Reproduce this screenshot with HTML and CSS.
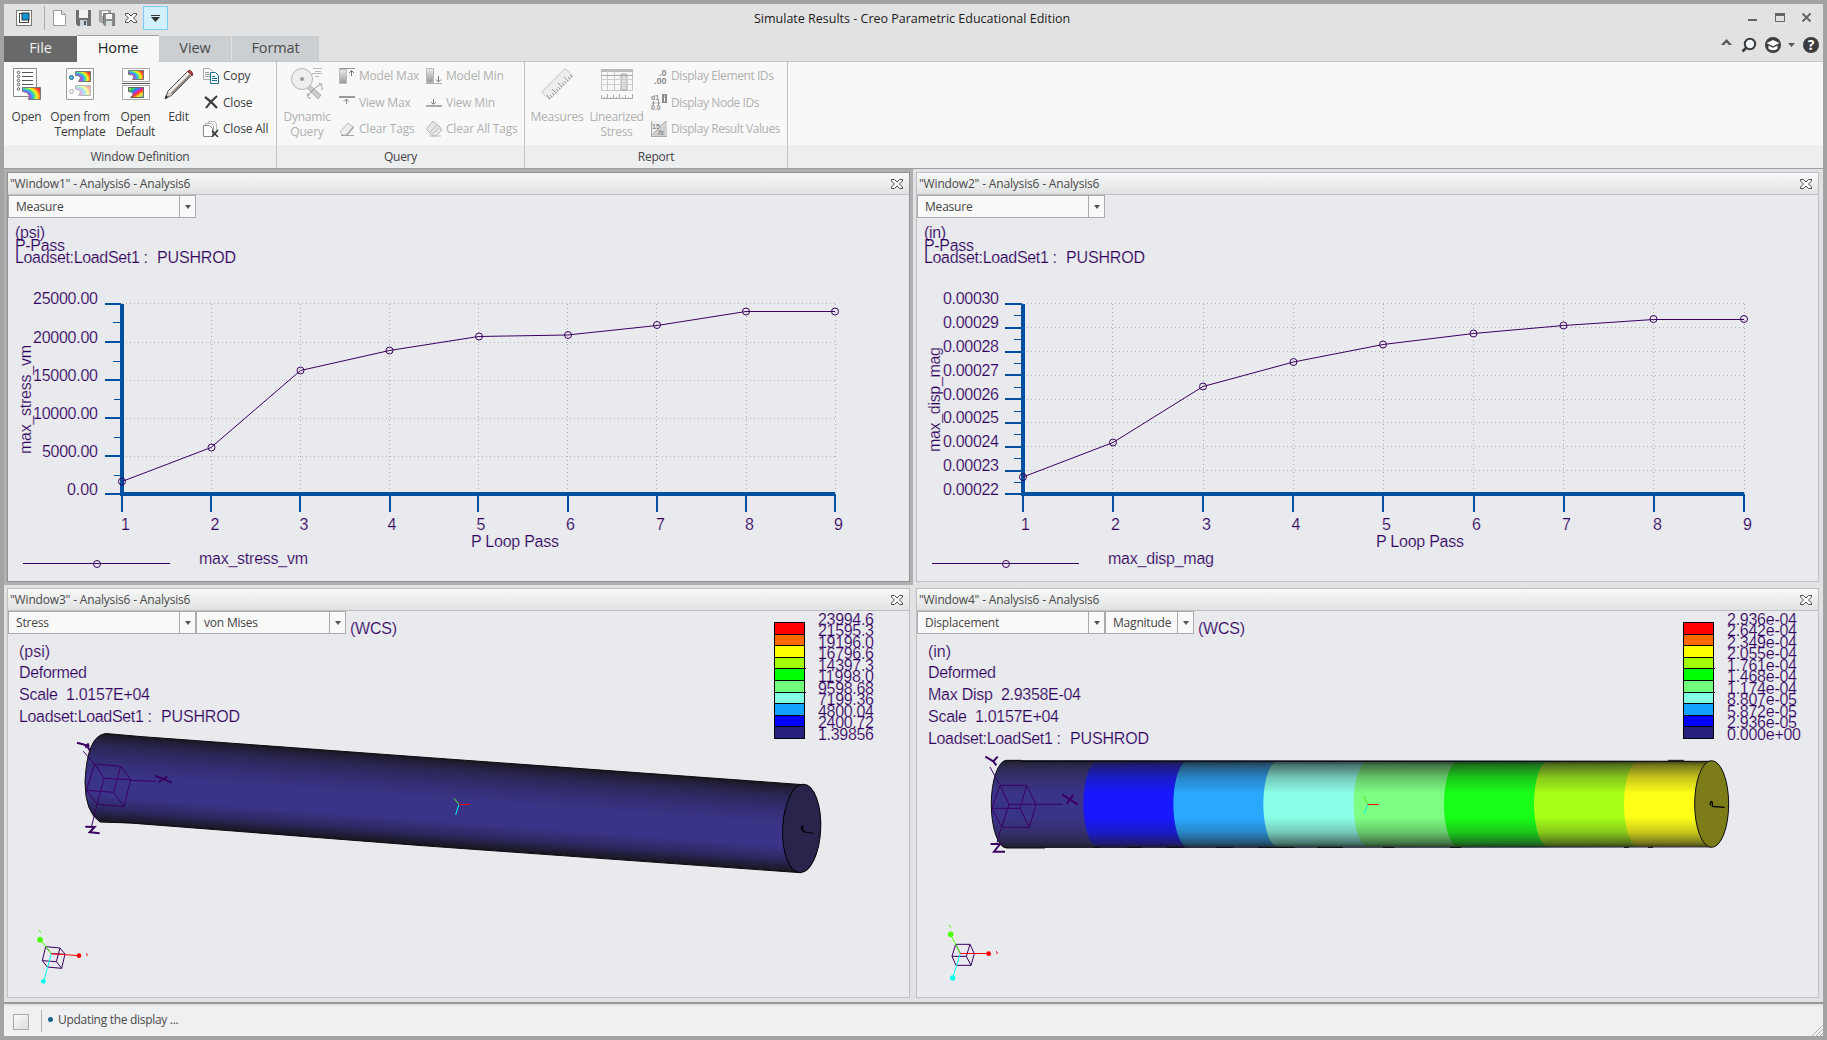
FILE: index.html
```html
<!DOCTYPE html>
<html lang="en">
<head>
<meta charset="utf-8">
<title>Simulate Results - Creo Parametric Educational Edition</title>
<link rel="stylesheet" href="styles.css">
</head>
<body>
<svg class="defs" width="0" height="0" aria-hidden="true">
  <defs>
    <radialGradient id="rainbow" cx="0" cy=".75" r="1.05">
      <stop offset=".3" stop-color="#f040c8"/><stop offset=".42" stop-color="#9058ff"/><stop offset=".53" stop-color="#38a8ff"/><stop offset=".63" stop-color="#40e090"/><stop offset=".76" stop-color="#f8f820"/><stop offset=".88" stop-color="#ff9a20"/><stop offset="1" stop-color="#ff3030"/>
    </radialGradient>
    <linearGradient id="rainbow2" x1="0" y1="0" x2="1" y2="1">
      <stop offset="0" stop-color="#ffe020"/><stop offset=".2" stop-color="#30d060"/><stop offset=".36" stop-color="#2080ff"/><stop offset=".46" stop-color="#c030e0"/><stop offset=".58" stop-color="#ff3030"/><stop offset=".76" stop-color="#ffe020"/><stop offset="1" stop-color="#40d0ff"/>
    </linearGradient>
    <linearGradient id="greys" x1="0" y1="0" x2="0" y2="1"><stop offset="0" stop-color="#eee"/><stop offset="1" stop-color="#999"/></linearGradient>
    <symbol id="xmark" viewBox="0 0 12 10"><path d="M.5.5h3l2.500 2.500 2.500-2.500h3v1.500l-3 3 3 3v1.500h-3l-2.500-2.500-2.500 2.500h-3V8l3-3-3-3z" fill="#fff" stroke="#4a4a4a" stroke-width="1"/></symbol>
    <linearGradient id="rod" gradientUnits="userSpaceOnUse" x1="450" y1="758.500" x2="443.500" y2="847">
      <stop offset="0" stop-color="#17161c"/><stop offset=".05" stop-color="#201e34"/><stop offset=".14" stop-color="#2a2654"/><stop offset=".3" stop-color="#332e72"/><stop offset=".48" stop-color="#3a3488"/><stop offset=".7" stop-color="#3a3488"/><stop offset=".85" stop-color="#2e2963"/><stop offset=".95" stop-color="#1f1c34"/><stop offset="1" stop-color="#17161c"/>
    </linearGradient>
    <linearGradient id="shade" x1="0" y1="0" x2="0" y2="1">
      <stop offset="0" stop-color="#1a1a1a" stop-opacity=".9"/><stop offset=".06" stop-color="#202020" stop-opacity=".6"/><stop offset=".2" stop-color="#222" stop-opacity=".25"/><stop offset=".38" stop-color="#222" stop-opacity="0"/><stop offset=".65" stop-color="#222" stop-opacity="0"/><stop offset=".82" stop-color="#222" stop-opacity=".25"/><stop offset=".94" stop-color="#202020" stop-opacity=".6"/><stop offset="1" stop-color="#1a1a1a" stop-opacity=".9"/>
    </linearGradient>
  </defs>
</svg>
<div class="app">
  <header class="titlebar">
    <div class="quick">
      <svg class="q-app" width="16" height="16"><rect x=".5" y=".5" width="15" height="15" fill="#fff" stroke="#777"/><rect x="3.500" y="3.500" width="9" height="9" fill="#fff" stroke="#444"/><rect x="6" y="3" width="7" height="7" fill="#0f94dc" stroke="#333"/></svg>
      <i class="q-sep"></i>
      <svg class="q-new" width="13" height="16"><path d="M.5.5h8l4 4v11h-12z" fill="#fff" stroke="#999"/><path d="M8.500.5v4h4" fill="#ddd" stroke="#999"/></svg>
      <svg class="q-save" width="15" height="16"><path d="M0 0h15v16H2l-2-2z" fill="#6e6e6e"/><path d="M3 0h9v8H3z" fill="#f2f2f2"/><path d="M4 10h7v6H4z" fill="#c8d4da"/><path d="M8 11h2v4H8z" fill="#555"/></svg>
      <svg class="q-saveall" width="17" height="16"><path d="M.5.5h11v12H2l-1.500-1.500z" fill="#aaa" stroke="#999"/><path d="M3 1h6v5H3z" fill="#f5f5f5"/><path d="M4.500 3.500h11v12H6l-1.500-1.500z" fill="#8b8b8b" stroke="#777"/><path d="M7 4h6v5H7z" fill="#f5f5f5"/><path d="M7 11h6v5H7z" fill="#d5dde0"/></svg>
      <svg class="q-x" width="12" height="10"><use href="#xmark"/></svg>
      <span class="q-more"><svg width="9" height="7"><path d="M0 0h9v1H0zM0 2h9L4.500 7z" fill="#333"/></svg></span>
    </div>
    <div class="caption">Simulate Results - Creo Parametric Educational Edition</div>
    <svg class="controls" width="106" height="42" viewBox="1717 11 106 42">
      <path d="M1748 19h9v2h-9z" fill="#666"/>
      <path d="M1775.500 13.500h9v8h-9zM1775 15h10" fill="none" stroke="#666"/><path d="M1775 13h10v3h-10z" fill="#666"/>
      <path d="M1802.500 13.500l8 8m0-8l-8 8" stroke="#666" stroke-width="2"/>
      <path d="M1721 45l5.500-6 5.500 6h-3l-2.500-2.500L1724 45z" fill="#555"/>
      <circle cx="1750" cy="44" r="5.200" fill="#eef6fa" stroke="#383c40" stroke-width="2"/><path d="M1746.500 47.500l-4 4" stroke="#383c40" stroke-width="2.600"/>
      <circle cx="1773" cy="45" r="8" fill="#3b3d40"/><path d="M1773 40l6.500 3-6.500 3.200-6.500-3.200z" fill="#fff"/><path d="M1768.500 45.500v3.200q4.500 3 9 0v-3.200l-4.500 2.200z" fill="#fff"/>
      <path d="M1788 43h7l-3.500 4z" fill="#555"/>
      <circle cx="1811" cy="45" r="8" fill="#3b3d40"/><text x="1811" y="50" class="help">?</text>
    </svg>
  </header>
  <nav class="tabs"><span class="tab file">File</span><span class="tab on">Home</span><span class="tab mid">View</span><span class="tab format">Format</span></nav>

  <section class="ribbon">
    <div class="group g1">
      <div class="tools">
        <div class="big"><svg width="32" height="32"><path d="M2.500.5h23v28h-23z" fill="#fff" stroke="#8a8a8a"/><path d="M11 4.500h11M11 8.500h11M11 12.500h11M11 16.500h11M11 21.500h6" stroke="#555"/><g fill="none" stroke="#666"><circle cx="7.500" cy="4.500" r="1.300"/><circle cx="7.500" cy="8.500" r="1.300"/><circle cx="7.500" cy="12.500" r="1.300"/><circle cx="7.500" cy="16.500" r="1.300"/><circle cx="7.500" cy="21" r="1.300"/></g><path d="M11.500 19.500h18v12h-12q3-7-6-8z" fill="url(#rainbow)" stroke="#777"/></svg><span>Open</span></div>
        <div class="big"><svg width="32" height="32"><path d="M2.500.5h27v31h-27z" fill="#fff" stroke="#999"/><circle cx="7.500" cy="9.500" r="2" fill="#5cc3e6" stroke="#16607c"/><circle cx="7.500" cy="23.500" r="2" fill="#fff" stroke="#aaa"/><path d="M11.500 3.500h15v10h-12q5-6-3-6z" fill="url(#rainbow)" stroke="#777"/><path d="M11.500 17.500h15v10h-12q5-6-3-6z" fill="url(#rainbow)" stroke="#555" opacity=".4"/></svg><span>Open from<br>Template</span></div>
        <div class="big"><svg width="32" height="32"><path d="M2.500.5h27v13h-27z" fill="#fff" stroke="#aaa"/><path d="M2.500 17.500h27v14h-27z" fill="#fff" stroke="#aaa"/><path d="M2 15.500h28" stroke="#555"/><path d="M8.500 2.500h15v9h-11q4-5-4-5z" fill="url(#rainbow)" stroke="#777"/><path d="M8.500 19.500h15v10h-13q6-5-2-6z" fill="url(#rainbow2)" stroke="#666"/></svg><span>Open<br>Default</span></div>
        <div class="big"><svg width="32" height="32"><path d="M2 31l3-8L25 3l4 4L9 27z" fill="#d9cec6" stroke="#555"/><path d="M5 24L25 4l1.500 1.500L7 25z" fill="#f6f2ee"/><path d="M9 26.500L28 8l-1.500-1.500L8 25z" fill="#8a7e78"/><path d="M24.500 3.500q2-2.500 4 0t1 4z" fill="#b03a34" stroke="#733"/><path d="M2 31l1-4 2 2z" fill="#222"/></svg><span>Edit</span></div>
        <ul class="small">
          <li><svg width="16" height="16"><path d="M.5.5h6l3 3v8h-9z" fill="#fff" stroke="#aaa"/><path d="M2 4.500h4M2 6.500h5M2 8.500h5" stroke="#999"/><path d="M7.500 4.500h5l3 3v8h-8z" fill="#fff" stroke="#1b6f93"/><path d="M9 8.500h3M9 10.500h5M9 12.500h5" stroke="#1b6f93"/></svg>Copy</li>
          <li><svg width="16" height="16"><path d="M2 3q7 5 12 11M14 2Q7 8 3 14" fill="none" stroke="#3c3f42" stroke-width="2.200"/></svg>Close</li>
          <li><svg width="16" height="16"><path d="M5.500.5h6l2 2v8h-8z" fill="#fff" stroke="#bbb"/><path d="M2.500 2.500h6l2 2v8h-8z" fill="#fff" stroke="#aaa"/><path d="M.5 4.500h6l3 3v8h-9z" fill="#fff" stroke="#888"/><path d="M9 10l6 6m0-7l-6 7" stroke="#333" stroke-width="1.500"/></svg>Close All</li>
        </ul>
      </div>
      <h2>Window Definition</h2>
    </div>
    <div class="group g2 off">
      <div class="tools">
        <div class="big"><svg width="32" height="32"><path d="M22 .5h9M24 3.500h6M21 5.500h10M24 8.500h4" stroke="#bbb"/><path d="M19 17l11 10-3 4-11-11z" fill="#ccc" stroke="#b5b5b5"/><circle cx="11" cy="11" r="10.500" fill="#eee" stroke="#b5b5b5"/><circle cx="11" cy="11" r="2" fill="#999"/><path d="M31 16q-7 2-14 12M20 30q-5 1-3-5M31 22q1-5-3-7" fill="none" stroke="#999"/></svg><span>Dynamic<br>Query</span></div>
        <ul class="small">
          <li><svg width="16" height="16"><path d="M0 .5h16" stroke="#999"/><path d="M.5 1.500h7v14h-7z" fill="url(#greys)" stroke="#bbb"/><path d="M12.500 8V2.500M10 5l2.500-2.500L15 5" fill="none" stroke="#777"/></svg>Model Max</li>
          <li><svg width="16" height="16"><path d="M0 3h16" stroke="#999" stroke-width="2"/><path d="M7.500 10V5M5 7.500L7.500 5 10 7.500" fill="none" stroke="#888"/></svg>View Max</li>
          <li><svg width="16" height="16"><path d="M1 11L8 3q1-1 2 0l3 2q1 1 0 2l-6 7H3z" fill="#eee" stroke="#bbb"/><path d="M2 14.500h13M8 14l6-7v-2" fill="none" stroke="#a5a5a5" stroke-width="1.200"/></svg>Clear Tags</li>
        </ul>
        <ul class="small">
          <li><svg width="16" height="16"><path d="M0 15.500h16" stroke="#aaa"/><path d="M.5.5h7v14h-7z" fill="url(#greys)" stroke="#bbb"/><path d="M12.500 8v6M10 11.500l2.500 2.500 2.500-2.500" fill="none" stroke="#777"/></svg>Model Min</li>
          <li><svg width="16" height="16"><path d="M0 12h16" stroke="#aaa" stroke-width="2"/><path d="M7.500 5v5M5 8l2.500 2.500L10 8" fill="none" stroke="#888"/></svg>View Min</li>
          <li><svg width="16" height="16"><path d="M1 7l5-6q1-1 2 0l6 5q2 2 1 4l-5 5H7L1 9z" fill="#e6e6e6" stroke="#b5b5b5"/><path d="M4 11l7-7M6 13l7-6M3 15h12" fill="none" stroke="#bbb"/></svg>Clear All Tags</li>
        </ul>
      </div>
      <h2>Query</h2>
    </div>
    <div class="group g3 off">
      <div class="tools">
        <div class="big"><svg width="32" height="32"><path d="M.5 24L24 .5 32 8 8.500 31.500z" fill="#ececec" stroke="#c4c4c4"/><path d="M9 31l-3-4m5 2l-2-2m4 0l-2-2m4 0l-4-4m6 2l-2-2m4 0l-2-2m4 0l-4-4m6 2l-2-2m4 0l-2-2m4 0l-4-4m6 2l-2-2m4 0l-2-2" stroke="#999" stroke-width="1"/></svg><span>Measures</span></div>
        <div class="big lin"><svg width="32" height="32"><path d="M.5 1.500h31v21H.5z" fill="#f8f8f8" stroke="#c5c5c5"/><path d="M0 1h32v3H0z" fill="#bbb"/><path d="M20 6h6v16h-6z" fill="#ddd" stroke="#aaa"/><path d="M6.500 3v19M13.500 3v19M0 11.500h31M0 16.500h31" stroke="#ccc"/><path d="M0 7.500h32" stroke="#aaa"/><path d="M0 30.500h32M.5 27v4M3.500 29v2M6.500 26v5M9.500 29v2M12.500 27v4M15.500 29v2M18.500 26v5M21.500 29v2M24.500 27v4M27.500 29v2M31.500 26v5" stroke="#aaa"/></svg><span>Linearized<br>Stress</span></div>
        <ul class="small">
          <li><svg width="16" height="16"><text x="15.500" y="7.500" class="mini e">.0</text><text x="15.500" y="15.500" class="mini e">.00</text></svg>Display Element IDs</li>
          <li><svg width="16" height="16"><text x="0" y="6" class="mini m2">d1</text><text x="0" y="16" class="mini m2">0.0</text><path d="M2.500 7v4M.5 9h4M7.500 6v5M5.500 9h4" stroke="#999"/><rect x="11" y="0" width="5" height="9" fill="#8a8a8a"/><path d="M13.500 1.500v1M13.500 3.500v4" stroke="#fff"/></svg>Display Node IDs</li>
          <li><svg width="16" height="16"><path d="M0 0h16L0 16z" fill="#eee"/><path d="M16 0v16H0z" fill="#d0d0d0"/><path d="M15 0L0 15" stroke="#999"/><text x="1" y="7.500" class="mini m2">15</text><text x="7" y="14" class="mini m2 it">fx</text><path d="M0 15.500h16M.5 0v16" stroke="#aaa"/></svg>Display Result Values</li>
        </ul>
      </div>
      <h2>Report</h2>
    </div>
    <div class="rest"></div>
  </section>

  <main class="workspace">
    <article class="pane selected">
      <h3>"Window1" - Analysis6 - Analysis6<svg width="12" height="10"><use href="#xmark"/></svg></h3>
      <div class="view">
        <svg class="canvas" viewBox="8 195 901 386" width="901" height="386">
          <g class="t">
            <text x="15" y="238" textLength="30">(psi)</text><text x="15" y="251" textLength="50">P-Pass</text><text x="15" y="263" textLength="133">Loadset:LoadSet1 :</text><text x="157" y="263" textLength="79">PUSHROD</text>
          </g>
          <path class="grid" d="M122 303.500h713M122 342.500h713M122 380.500h713M122 418.500h713M122 456.500h713M211.500 304v207M300.500 304v207M389.500 304v207M478.500 304v207M567.500 304v207M656.500 304v207M746.500 304v207M835.500 304v207"/>
          <path class="ax" d="M120 304h4v192h-4zM120 492h715v4H120z"/>
          <path class="tk2" d="M105 304h16M105 342h16M105 380h16M105 418h16M105 456h16M105 494h16M122 496v16M211 496v16M300 496v16M390 496v16M478 496v16M568 496v16M657 496v16M746 496v16M835 494v18"/>
          <path class="tk1" d="M113 322.500h8M113 361.500h8M114 399.500h7M114 437.500h7M114 475.500h7"/>
          <path class="curve" d="M122 481.500L211 447.500 300.500 370.500 389.500 350.500 478.500 336.500 567.500 335 657 325.500 746 311.500H835"/>
          <g class="mk"><circle cx="122" cy="481.500" r="3.500"/><circle cx="211.500" cy="447.500" r="3.500"/><circle cx="300.500" cy="370.500" r="3.500"/><circle cx="389.500" cy="350.500" r="3.500"/><circle cx="479" cy="336.500" r="3.500"/><circle cx="568" cy="335" r="3.500"/><circle cx="657" cy="325" r="3.500"/><circle cx="746" cy="311.500" r="3.500"/><circle cx="835" cy="311.500" r="3.500"/></g>
          <g class="t e">
            <text x="98" y="304" textLength="65">25000.00</text><text x="98" y="343" textLength="65">20000.00</text><text x="98" y="381" textLength="65">15000.00</text><text x="98" y="419" textLength="65">10000.00</text><text x="98" y="457" textLength="56">5000.00</text><text x="98" y="495" textLength="31">0.00</text>
          </g>
          <g class="t">
            <text x="121" y="530">1</text><text x="210.500" y="530">2</text><text x="299.500" y="530">3</text><text x="387.500" y="530">4</text><text x="476.500" y="530">5</text><text x="566" y="530">6</text><text x="656" y="530">7</text><text x="745" y="530">8</text><text x="834" y="530">9</text>
            <text x="471" y="547" textLength="88">P Loop Pass</text><text x="199" y="564" textLength="109">max_stress_vm</text>
            <text transform="translate(31 454) rotate(-90)" textLength="109">max_stress_vm</text>
          </g>
          <path class="curve" d="M23 563.500h147"/><circle class="mk" cx="97" cy="564" r="3.500"/>
        </svg>
        <div class="combos"><span class="combo w188">Measure<b></b></span></div>
      </div>
    </article>

    <article class="pane">
      <h3>"Window2" - Analysis6 - Analysis6<svg width="12" height="10"><use href="#xmark"/></svg></h3>
      <div class="view">
        <svg class="canvas" viewBox="917 195 901 386" width="901" height="386">
          <g class="t">
            <text x="924" y="238" textLength="22">(in)</text><text x="924" y="251" textLength="50">P-Pass</text><text x="924" y="263" textLength="133">Loadset:LoadSet1 :</text><text x="1066" y="263" textLength="79">PUSHROD</text>
          </g>
          <path class="grid" d="M1023 303.500h721M1023 327.500h721M1023 351.500h721M1023 375.500h721M1023 399.500h721M1023 422.500h721M1023 446.500h721M1023 470.500h721M1112.500 304v207M1203.500 304v207M1293.500 304v207M1383.500 304v207M1473.500 304v207M1563.500 304v207M1653.500 304v207M1744.500 304v207"/>
          <path class="ax" d="M1021 304h4v192h-4zM1021 492h723v4h-723z"/>
          <path class="tk2" d="M1005 304h17M1005 328h17M1005 352h17M1005 375h17M1005 399h17M1005 423h17M1005 447h17M1005 471h17M1005 494h17M1023 496v16M1113 496v16M1203 496v16M1293 496v16M1383 496v16M1474 496v16M1564 496v16M1654 496v16M1744 494v18"/>
          <path class="tk1" d="M1014 315.500h8M1014 339.500h8M1014 363.500h8M1014 387.500h8M1014 411.500h8M1014 434.500h8M1014 458.500h8M1014 482.500h8"/>
          <path class="curve" d="M1023 477L1113 442.500 1203 386.500 1293.500 362 1383 344.500 1473.500 333.500 1563.500 325.500 1653.500 319.500H1744"/>
          <g class="mk"><circle cx="1023" cy="477" r="3.500"/><circle cx="1113" cy="442.500" r="3.500"/><circle cx="1203" cy="386.500" r="3.500"/><circle cx="1293.500" cy="362" r="3.500"/><circle cx="1383" cy="344.500" r="3.500"/><circle cx="1473.500" cy="333.500" r="3.500"/><circle cx="1563.500" cy="325.500" r="3.500"/><circle cx="1653.500" cy="319" r="3.500"/><circle cx="1744" cy="319" r="3.500"/></g>
          <g class="t e">
            <text x="999" y="304" textLength="56">0.00030</text><text x="999" y="328" textLength="56">0.00029</text><text x="999" y="352" textLength="56">0.00028</text><text x="999" y="376" textLength="56">0.00027</text><text x="999" y="400" textLength="56">0.00026</text><text x="999" y="423" textLength="56">0.00025</text><text x="999" y="447" textLength="56">0.00024</text><text x="999" y="471" textLength="56">0.00023</text><text x="999" y="495" textLength="56">0.00022</text>
          </g>
          <g class="t">
            <text x="1021" y="530">1</text><text x="1111" y="530">2</text><text x="1202" y="530">3</text><text x="1291.500" y="530">4</text><text x="1382" y="530">5</text><text x="1472" y="530">6</text><text x="1562" y="530">7</text><text x="1653" y="530">8</text><text x="1743" y="530">9</text>
            <text x="1376" y="547" textLength="88">P Loop Pass</text><text x="1108" y="564" textLength="106">max_disp_mag</text>
            <text transform="translate(940 452) rotate(-90)" textLength="105">max_disp_mag</text>
          </g>
          <path class="curve" d="M932 563.500h147"/><circle class="mk" cx="1006" cy="564" r="3.500"/>
        </svg>
        <div class="combos"><span class="combo w188">Measure<b></b></span></div>
      </div>
    </article>

    <article class="pane">
      <h3>"Window3" - Analysis6 - Analysis6<svg width="12" height="10"><use href="#xmark"/></svg></h3>
      <div class="view">
        <svg class="canvas" viewBox="8 611 901 386" width="901" height="386">
          <path d="M106 733.500L140 736.500 420 757 801 784.500 798 872.500 420 845.500 135 823.500 100 822Q85 812 85 782 87 735 106 733.500z" fill="url(#rod)"/>
          <path d="M106 733.500L140 736.500 420 757 801 784.500M798 872.500L420 845.500 130 823 100 822Q85 812 85 782 87 735 106 733.500" class="edge"/>
          <ellipse cx="801.700" cy="828.500" rx="19" ry="44.200" transform="rotate(2.500 801.700 828.500)" fill="#28244c" stroke="#000"/>
          <path d="M801.500 830v-3q1-2 1.500 0v4.500l10.500 2" fill="none" stroke="#000" stroke-width="1.200"/>
          <g transform="translate(0 580) scale(.33333)" class="wire">
            <path d="M284 552L362 559 392 598 372 680 291 673 259 631zL312 595 392 599M312 595L291 673M362 559L341 637 259 631M341 637L372 680M392 601L470 604M284 552L250 514M291 673L275 738"/>
            <path class="bold" d="M465 587L515 608M476 606L502 590M231 488L268 498M256 503L266 490M262 499L269 511M256 740L284 741 269 757 299 760"/>
            <path d="M137 1100L180 1104 195 1122 185 1165 142 1161 127 1142zL154 1121 195 1123M180 1104L169 1145 127 1142M169 1145L185 1165"/>
            <path d="M154 1121L122 1080M118 1050l4 8" stroke="#50ff10"/><path d="M154 1121L131 1204" stroke="#00ffec"/><path d="M154 1121L237 1127M258 1120l5 4-4 4" stroke="#f00"/>
            <circle cx="120" cy="1079" r="8.500" fill="#50ff00" stroke="none"/><circle cx="130" cy="1204" r="7" fill="#00ffec" stroke="none"/><circle cx="237" cy="1127" r="7" fill="#f00" stroke="none"/>
          </g>
          <g transform="translate(420 580) scale(.33333)" class="wire"><path d="M117 673L102 655" stroke="#50f030"/><path d="M117 673L107 704" stroke="#00ffec"/><path d="M117 673.500H149" stroke="#f00"/></g>
          <g class="key" transform="translate(774 622)"><rect width="31" height="12" fill="#f00"/><rect y="12" width="31" height="11" fill="#ff6a00"/><rect y="23" width="31" height="12" fill="#ff0"/><rect y="35" width="31" height="11" fill="#a2ff00"/><rect y="46" width="31" height="12" fill="#0f0"/><rect y="58" width="31" height="12" fill="#70ff78"/><rect y="70" width="31" height="11" fill="#80ffe4"/><rect y="81" width="31" height="12" fill="#16a2ff"/><rect y="93" width="31" height="11" fill="#00f"/><rect y="104" width="31" height="12" fill="#26207e"/><path d="M.5.500h30v116h-30zM0 12.500h31M0 23.500h31M0 35.500h31M0 46.500h32M0 58.500h31M0 70.500h32M0 81.500h31M0 93.500h31M0 104.500h31" fill="none" stroke="#000"/></g>
          <g class="t">
            <text x="350" y="634" textLength="47">(WCS)</text><text x="19" y="656.500" textLength="31">(psi)</text><text x="19" y="678" textLength="68">Deformed</text><text x="19" y="700" textLength="39">Scale</text><text x="66" y="700" textLength="84">1.0157E+04</text><text x="19" y="722" textLength="133">Loadset:LoadSet1 :</text><text x="161" y="722" textLength="79">PUSHROD</text>
            <text x="818" y="625" textLength="56">23994.6</text><text x="818" y="636" textLength="56">21595.3</text><text x="818" y="648" textLength="56">19196.0</text><text x="818" y="659" textLength="56">16796.6</text><text x="818" y="671" textLength="56">14397.3</text><text x="818" y="682" textLength="56">11998.0</text><text x="818" y="694" textLength="56">9598.68</text><text x="818" y="705" textLength="56">7199.36</text><text x="818" y="717" textLength="56">4800.04</text><text x="818" y="728" textLength="56">2400.72</text><text x="818" y="740" textLength="56">1.39856</text>
          </g>
        </svg>
        <div class="combos"><span class="combo w188">Stress<b></b></span><span class="combo w150">von Mises<b></b></span></div>
      </div>
    </article>

    <article class="pane">
      <h3>"Window4" - Analysis6 - Analysis6<svg width="12" height="10"><use href="#xmark"/></svg></h3>
      <div class="view">
        <svg class="canvas" viewBox="917 611 901 386" width="901" height="386">
          <g transform="translate(910 580) scale(.33333)">
            <path d="M290 541A46 131 0 0 0 290 804L2405 802V543z" fill="#3a3488"/>
            <path d="M564 543A44 129 0 0 0 564 801H2405V543z" fill="#1818ff"/>
            <path d="M834 543A44 129 0 0 0 834 801H2405V543z" fill="#2aa8ff"/>
            <path d="M1104 543A44 129 0 0 0 1104 801H2405V543z" fill="#8cffe8"/>
            <path d="M1375 543A44 129 0 0 0 1375 801H2405V543z" fill="#7cff82"/>
            <path d="M1646 543A44 129 0 0 0 1646 801H2405V543z" fill="#18ff18"/>
            <path d="M1916 543A44 129 0 0 0 1916 801H2405V543z" fill="#a8ff18"/>
            <path d="M2186 543A44 129 0 0 0 2186 801H2405V543z" fill="#ffff18"/>
            <path d="M290 541A46 131 0 0 0 290 804L2405 802V543z" fill="url(#shade)"/>
            <path d="M290 804A46 131 0 0 1 290 541H335V544H2405M290 804H405M552 802h18M651 802h42M771 802h51M918 802h51M1044 802h111M1221 802h78M1419 802h33M1620 802h33M2142 802h15M2214 802h15M2274 541h48" class="edge"/>
            <ellipse cx="2405" cy="672" rx="51" ry="130" fill="#7c7c18" class="edge"/>
            <path d="M2401 676v-8q4-8 6 0v11l37 3" stroke="#000" stroke-width="4" fill="none"/>
            <g class="wire">
              <path d="M270 616H350L378 673 358 742H275L246 685zL297 673H458M297 673L275 742M350 616L330 685H246M330 685L358 742M268 612L240 561M273 745L261 788"/>
              <path class="bold" d="M457 644L503 673M470 672L490 644M226 530L250 544M263 530L250 544 259 556M242 792H270L252 815H285"/>
              <path d="M137 1093H180L193 1121 183 1156H138L126 1129zL151 1121M180 1093L169 1129H126M169 1129L183 1156"/>
              <path d="M151 1121L122 1064M118 1035l5 8" stroke="#50ff10"/><path d="M151 1121L128 1194" stroke="#00ffec"/><path d="M151 1120.500H236M258 1114l5 4-4 4" stroke="#f00"/>
              <circle cx="122" cy="1063" r="8.500" fill="#50ff00" stroke="none"/><circle cx="128" cy="1194" r="8" fill="#00ffec" stroke="none"/><circle cx="236" cy="1121" r="7" fill="#f00" stroke="none"/>
              <path d="M1373 673L1361 649" stroke="#50f010"/><path d="M1373 673L1363 701" stroke="#00ffec"/><path d="M1373 673.500H1406" stroke="#f00"/>
            </g>
          </g>
          <g class="key" transform="translate(1683 622)"><rect width="31" height="12" fill="#f00"/><rect y="12" width="31" height="11" fill="#ff6a00"/><rect y="23" width="31" height="12" fill="#ff0"/><rect y="35" width="31" height="11" fill="#a2ff00"/><rect y="46" width="31" height="12" fill="#0f0"/><rect y="58" width="31" height="12" fill="#70ff78"/><rect y="70" width="31" height="11" fill="#80ffe4"/><rect y="81" width="31" height="12" fill="#16a2ff"/><rect y="93" width="31" height="11" fill="#00f"/><rect y="104" width="31" height="12" fill="#26207e"/><path d="M.5.500h30v116h-30zM0 12.500h31M0 23.500h31M0 35.500h31M0 46.500h32M0 58.500h31M0 70.500h32M0 81.500h31M0 93.500h31M0 104.500h31" fill="none" stroke="#000"/></g>
          <g class="t">
            <text x="1198" y="634" textLength="47">(WCS)</text><text x="928" y="656.500" textLength="23">(in)</text><text x="928" y="678" textLength="68">Deformed</text><text x="928" y="700" textLength="65">Max Disp</text><text x="1001" y="700" textLength="80">2.9358E-04</text><text x="928" y="722" textLength="39">Scale</text><text x="975" y="722" textLength="84">1.0157E+04</text><text x="928" y="744" textLength="133">Loadset:LoadSet1 :</text><text x="1070" y="744" textLength="79">PUSHROD</text>
            <text x="1727" y="625" textLength="70">2.936e-04</text><text x="1727" y="636" textLength="70">2.642e-04</text><text x="1727" y="648" textLength="70">2.349e-04</text><text x="1727" y="659" textLength="70">2.055e-04</text><text x="1727" y="671" textLength="70">1.761e-04</text><text x="1727" y="682" textLength="70">1.468e-04</text><text x="1727" y="694" textLength="70">1.174e-04</text><text x="1727" y="705" textLength="70">8.807e-05</text><text x="1727" y="717" textLength="70">5.872e-05</text><text x="1727" y="728" textLength="70">2.936e-05</text><text x="1727" y="740" textLength="74">0.000e+00</text>
          </g>
        </svg>
        <div class="combos"><span class="combo w188">Displacement<b></b></span><span class="combo w89">Magnitude<b></b></span></div>
      </div>
    </article>
  </main>

  <footer class="status"><i class="box"></i><i class="bar"></i><i class="dot"></i><span>Updating the display ...</span><svg width="12" height="12"><path d="M12 1L1 12M12 5L5 12M12 9L9 12" stroke="#b0b0b0"/></svg></footer>
</div>
</body>
</html>
```
FILE: styles.css
```css
* { box-sizing: border-box; }
body { margin: 0; font: 12px/15px "Open Sans", "Noto Sans", sans-serif; color: #3c3c3c; letter-spacing: -.2px; }
.defs { display: block; height: 0; position: absolute; }
h2, h3, ul { margin: 0; padding: 0; font: inherit; list-style: none; }
svg { display: block; flex: none; }

.app { width: 1827px; height: 1040px; border: 4px solid #a3a3a3; background: #e2e2e2; display: flex; flex-direction: column; overflow: hidden; }

/* title bar */
.titlebar { height: 31px; flex: none; display: flex; }
.quick { display: flex; align-items: center; flex: none; height: 28px; padding-left: 12px; width: 750px; }
.q-sep { width: 1px; height: 24px; margin: 0 8px 0 12px; background: #aaa; }
.q-save { margin-left: 10px; }
.q-saveall { margin-left: 8px; }
.q-x { margin: 0 6px 0 9px; }
.q-more { width: 25px; height: 24px; border: 1px solid #7acdf3; background: #d2f0fd; display: flex; align-items: center; justify-content: center; }
.caption { flex: none; margin-right: auto; padding-top: 7px; color: #1c1c1c; white-space: nowrap; font-size: 12.500px; width: 320px; letter-spacing: 0; }
.controls { margin-top: 7px; height: 42px; position: relative; }
.help { font: bold 14px "Open Sans", sans-serif; fill: #fff; text-anchor: middle; letter-spacing: 0; }

/* tabs */
.tabs { height: 27px; flex: none; display: flex; align-items: flex-end; border-bottom: 1px solid #c4c6c9; font-size: 14.500px; }
.tab { height: 25px; text-align: center; line-height: 23px; background: #cbcfd2; color: #4a4a4a; letter-spacing: -.1px; }
.file { width: 73px; background: #696969; color: #f0f0f0; height: 26px; margin-bottom: -1px; }
.on { width: 82px; height: 27px; margin-bottom: -1px; background: #f8f8f8; border-top: 1px solid #a0a0a4; color: #222; line-height: 24px; }
.mid { width: 72px; }
.format { width: 87px; margin-left: 1px; }

/* ribbon */
.ribbon { height: 107px; flex: none; display: flex; border-bottom: 1px solid #9c9da0; background: #f8f8f8; }
.group { border-right: 1px solid #c0c3c6; display: flex; flex-direction: column; }
.rest { flex: 1; border-bottom: 23px solid #edeef0; }
.group h2 { height: 23px; line-height: 24px; background: #edeef0; text-align: center; color: #444; letter-spacing: -.25px; flex: none; }
.tools { height: 83px; flex: none; display: grid; padding-top: 6px; }
.g1 { width: 273px; }
.g1 .tools { grid-template-columns: 45px 62px 49px 37px 80px; }
.g1 .small { padding-left: 6px; }
.g2 { width: 248px; }
.g2 .tools { grid-template-columns: 60px 89px 98px; }
.g2 .big + .small { padding-left: 2px; }
.g3 { width: 263px; }
.g3 .tools { grid-template-columns: 64px 55px 143px; }
.g3 .small { padding-left: 7px; letter-spacing: -.42px; }
.big { display: flex; flex-direction: column; align-items: center; text-align: center; white-space: nowrap; }
.big span { margin-top: 9px; }
.lin { letter-spacing: -.35px; }
.off .tools { color: #b0b0b0; }
.small { margin-top: -5.500px; }
.small li { display: flex; align-items: center; height: 26.500px; white-space: nowrap; }
.small svg { margin-right: 4px; }
.mini { font: bold 9px "Liberation Sans", sans-serif; fill: #8a8a8a; letter-spacing: 0; }
.m2 { font-size: 7px; }
.it { font-style: italic; }
.e { text-anchor: end; }

/* result windows */
.workspace { flex: none; height: 833px; background: #e0e2e4; display: grid; grid-template-columns: 909px 909px; grid-template-rows: 416px 417px; }
.pane { border: solid #e0e2e4; border-width: 3px 3px 4px 3px; display: flex; flex-direction: column; }
.pane h3 { width: 903px; height: 23px; flex: none; border: 1px solid #bcc0c4; background: linear-gradient(#f7f8f8, #e1e2e2); display: flex; justify-content: space-between; align-items: center; padding: 0 6px 0 2px; color: #4a4a4a; letter-spacing: -.17px; }
.pane .view { width: 903px; height: 387px; border: 1px solid #bcc0c4; border-top: 0; background: #e8eaee; display: grid; }
.pane.selected { background: #b0b0b0; border-color: #b0b0b0; }
.pane.selected .view, .pane.selected h3 { border-color: #929292; }
.pane.selected h3 { border-bottom-color: #bcc0c4; }
.canvas, .combos { grid-area: 1 / 1; }
.combos { display: flex; align-items: flex-start; }
.combo { height: 23px; border: 1px solid #a9abad; background: #f9f9f9; display: flex; justify-content: space-between; padding-left: 7px; line-height: 21px; color: #444; white-space: nowrap; }
.combo b { width: 16px; border-left: 1px solid #a9abad; display: flex; align-items: center; justify-content: center; }
.combo b::after { content: ""; border: 3.500px solid transparent; border-top: 4px solid #555; border-bottom: 0; }
.w188 { width: 188px; }
.w150 { width: 150px; }
.w89 { width: 89px; }

/* plots: the labels get a hairline in the canvas colour to keep the letters thin */
.t { font: 16px "Liberation Sans", Arial, sans-serif; fill: #30005c; letter-spacing: 0; stroke: #e8eaee; stroke-width: .18px; }
.grid, .tk1, .tk2, .ax, .key { shape-rendering: crispEdges; }
.grid { stroke: #b0b0b4; stroke-dasharray: 1 3; fill: none; }
.ax { fill: #0050a0; }
.tk2 { stroke: #0050a0; stroke-width: 2; }
.tk1 { stroke: #0050a0; }
.curve { fill: none; stroke: #3a0060; }
.mk { fill: none; stroke: #3a0060; }
.edge { stroke: #0c0c10; vector-effect: non-scaling-stroke; }
path.edge { fill: none; }
.wire path { fill: none; vector-effect: non-scaling-stroke; }
.wire { stroke: #3a0060; }
.wire .bold { stroke-width: 2; }

/* status bar */
.status { flex: 1; background: #eff0f2; border-top: 2px solid #98999c; box-shadow: inset 0 2px #e0e2e4; display: flex; align-items: center; color: #4a4a4a; }
.box { width: 16px; height: 16px; margin: 3px 0 0 9px; border: 1px solid #aaa; background: linear-gradient(135deg, #fafafa, #ddd); }
.bar { width: 1px; height: 22px; margin: 2px 6px 0 12px; background: #b4b4b4; }
.dot { width: 5px; height: 5px; border-radius: 50%; background: #19648a; margin-top: -2px; }
.status span { margin: -2px auto 0 5px; letter-spacing: -.3px; }
.status svg { align-self: flex-end; }
```
